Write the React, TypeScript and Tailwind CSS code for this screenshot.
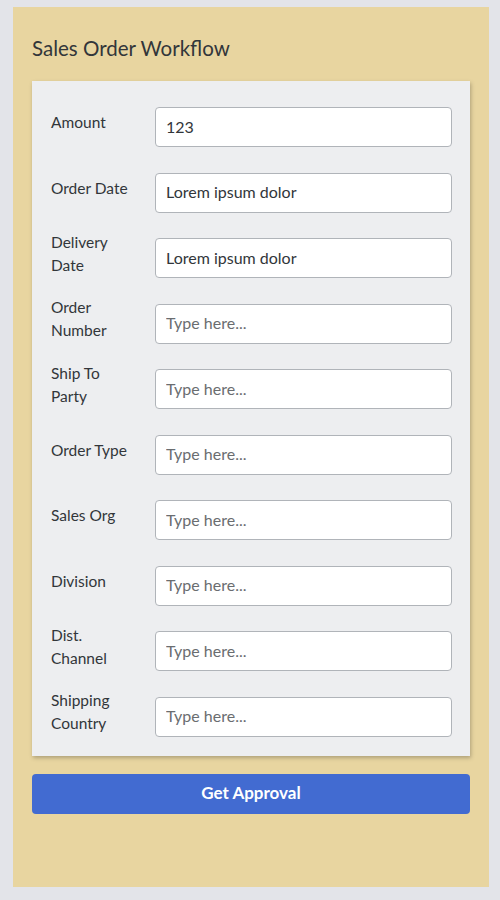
const fields: { label: string; value?: string }[] = [
  { label: 'Amount', value: '123' },
  { label: 'Order Date', value: 'Lorem ipsum dolor' },
  { label: 'Delivery Date', value: 'Lorem ipsum dolor' },
  { label: 'Order Number' },
  { label: 'Ship To Party' },
  { label: 'Order Type' },
  { label: 'Sales Org' },
  { label: 'Division' },
  { label: 'Dist. Channel' },
  { label: 'Shipping Country' },
];

export default function App() {
  return (
    <div
      className="min-h-[900px] w-[500px] bg-[#e3e4e9] pl-[13px] pt-[7px] text-[#32363a]"
      style={{ fontFamily: 'Lato, "Open Sans", sans-serif' }}
    >
      <div className="h-[880px] w-[476px] bg-[#e8d5a0] px-[19px] pt-[27px]">
        <h1 className="mb-[19px] text-[20.5px] leading-[28px]">Sales Order Workflow</h1>

        <div className="bg-[#edeef0] pb-[19px] pl-[19px] pr-[18px] pt-[26px] shadow-[1px_2px_4px_rgba(0,0,0,0.25)]">
          <div className="flex flex-col gap-[25.5px]">
            {fields.map((f) => (
              <div key={f.label} className="flex h-[40px] items-center">
                <label className="w-[104px] shrink-0 pb-[9px] pr-[22px] text-[15.5px] leading-[23px]">
                  {f.label}
                </label>
                <input
                  defaultValue={f.value}
                  placeholder="Type here..."
                  className="h-[40px] min-w-0 flex-1 rounded-[4px] border border-[#b0b4b9] bg-white px-[10px] pb-[2px] text-[16px] font-normal text-[#32363a] outline-none placeholder:text-[#6a6d70]"
                />
              </div>
            ))}
          </div>
        </div>

        <button className="mt-[18px] h-[40px] w-full rounded-[4px] bg-[#426bd1] pb-[1px] text-[17px] font-bold text-white">
          Get Approval
        </button>
      </div>
    </div>
  );
}
